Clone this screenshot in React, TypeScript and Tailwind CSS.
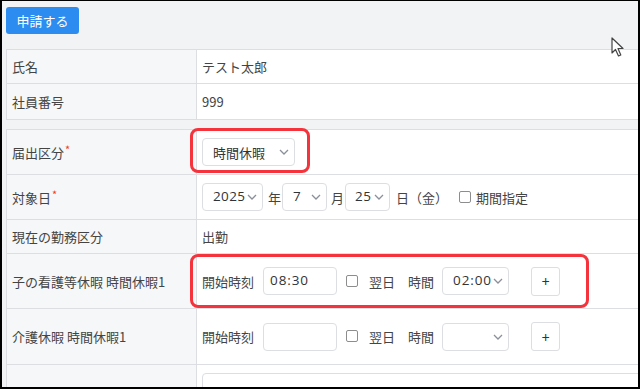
import React from "react";

const font = { fontFamily: '"Noto Sans CJK JP", "Noto Sans", sans-serif' };
const numFont = { fontFamily: '"Open Sans", "Noto Sans CJK JP", sans-serif' };

function Chevron() {
  return (
    <svg width="10" height="6" viewBox="0 0 10 6" className="shrink-0">
      <path d="M1 1 L5 5 L9 1" fill="none" stroke="#8a8f99" strokeWidth="1.3" />
    </svg>
  );
}

function Select({ w, value, textPl = "pl-[10px]", num, track = "" }: { w: string; value: string; textPl?: string; num?: boolean; track?: string }) {
  return (
    <div className={`${w} h-[28px] flex items-center justify-between ${textPl} pr-[5px] bg-white border border-[#dcdee2] rounded-[4px] text-[#333]`}>
      <span style={num ? numFont : undefined} className={num ? `text-[13.5px] ${track}` : ""}>{value}</span>
      <Chevron />
    </div>
  );
}

function Checkbox() {
  return <span className="inline-block w-[12px] h-[12px] border border-[#8d8d8d] rounded-[2px] bg-white shrink-0" />;
}

function Row({ label, h, children, req, last }: { label: React.ReactNode; h: string; children?: React.ReactNode; req?: boolean; last?: boolean }) {
  return (
    <div className={`flex ${h} ${last ? "" : "border-b border-[#dcdee2]"}`}>
      <div className="w-[190px] shrink-0 bg-[#f6f7f8] border-r border-[#dcdee2] flex items-center pl-[5px] text-[#444]">
        <span>{label}</span>
        {req && <span className="text-[#ed4014] text-[11px] self-start mt-[14px] ml-[1px]">*</span>}
      </div>
      <div className="flex-1 bg-white flex items-center pl-[5px] text-[#444]">{children}</div>
    </div>
  );
}

function TimeRow({ start, dur }: { start: string; dur: string }) {
  return (
    <>
      <span>開始時刻</span>
      <div className="ml-[9px] w-[74px] h-[28px] bg-white border border-[#dcdee2] rounded-[4px] flex items-center pl-[6px] text-[#333]">
        <span style={numFont} className="text-[13.5px] tracking-[0.9px]">{start}</span>
      </div>
      <span className="ml-[9px]"><Checkbox /></span>
      <span className="ml-[11px]">翌日</span>
      <span className="ml-[13px]">時間</span>
      <div className="ml-[8px]">
        <Select w="w-[67px]" value={dur} textPl="pl-[10px]" num track="tracking-[0.9px]" />
      </div>
      <div className="ml-[22px] w-[29px] h-[29px] bg-white border border-[#dcdee2] rounded-[3px] flex items-center justify-center text-[#333] text-[14px]">+</div>
    </>
  );
}

export default function App() {
  return (
    <div
      style={font}
      className="relative w-[640px] h-[389px] overflow-hidden bg-[#f2f3f5] border-l-2 border-t border-r-2 border-b-2 border-black text-[13px] leading-none"
    >
      <div className="pl-[4px] pt-[6px]">
        <div className="w-[73px] h-[27px] bg-[#2d8cf0] rounded-[3px] flex items-center justify-center text-white text-[13px]">
          申請する
        </div>

        <div className="mt-[15px] border-t border-l border-b border-[#dcdee2]">
          <Row label="氏名" h="h-[34px]">テスト太郎</Row>
          <Row label="社員番号" h="h-[35px]" last>999</Row>
        </div>

        <div className="mt-[9px] border-t border-l border-[#dcdee2]">
          <Row label="届出区分" h="h-[45px]" req>
            <Select w="w-[93px]" value="時間休暇" />
          </Row>
          <Row label="対象日" h="h-[45px]" req>
            <Select w="w-[61px]" value="2025" num track="tracking-[0.4px]" />
            <span className="ml-[5px]">年</span>
            <div className="ml-[1px]"><Select w="w-[45px]" value="7" num /></div>
            <span className="ml-[4px]">月</span>
            <div className="ml-[1px]"><Select w="w-[45px]" value="25" textPl="pl-[9px]" num track="tracking-[0.4px]" /></div>
            <span className="ml-[6px]">日（金）</span>
            <span className="ml-[11px]"><Checkbox /></span>
            <span className="ml-[5px]">期間指定</span>
          </Row>
          <Row label="現在の勤務区分" h="h-[34px]">出勤</Row>
          <Row label="子の看護等休暇 時間休暇1" h="h-[55px]">
            <TimeRow start="08:30" dur="02:00" />
          </Row>
          <Row label="介護休暇 時間休暇1" h="h-[56px]">
            <TimeRow start="" dur="" />
          </Row>
          <div className="flex h-[40px]">
            <div className="w-[190px] shrink-0 bg-[#f6f7f8] border-r border-[#dcdee2]" />
            <div className="flex-1 bg-white pl-[5px] pt-[8px]">
              <div className="w-[440px] h-[40px] border border-[#dcdee2] rounded-[4px] bg-white" />
            </div>
          </div>
        </div>
      </div>

      {/* red annotation boxes */}
      <div className="absolute left-[188px] top-[127px] w-[120px] h-[45px] border-[3px] border-[#f4333c] rounded-[8px]" />
      <div className="absolute left-[188px] top-[253px] w-[399px] h-[54px] border-[3px] border-[#f4333c] rounded-[8px]" />

      {/* mouse cursor */}
      <svg className="absolute left-[609px] top-[36px]" width="16" height="22" viewBox="0 0 16 22">
        <path d="M1 1 L1 16 L4.5 12.5 L7.5 19 L9.8 18 L7 11.5 L12 11.5 Z" fill="#fff" stroke="#444" strokeWidth="1.2" strokeLinejoin="round" />
      </svg>
    </div>
  );
}
